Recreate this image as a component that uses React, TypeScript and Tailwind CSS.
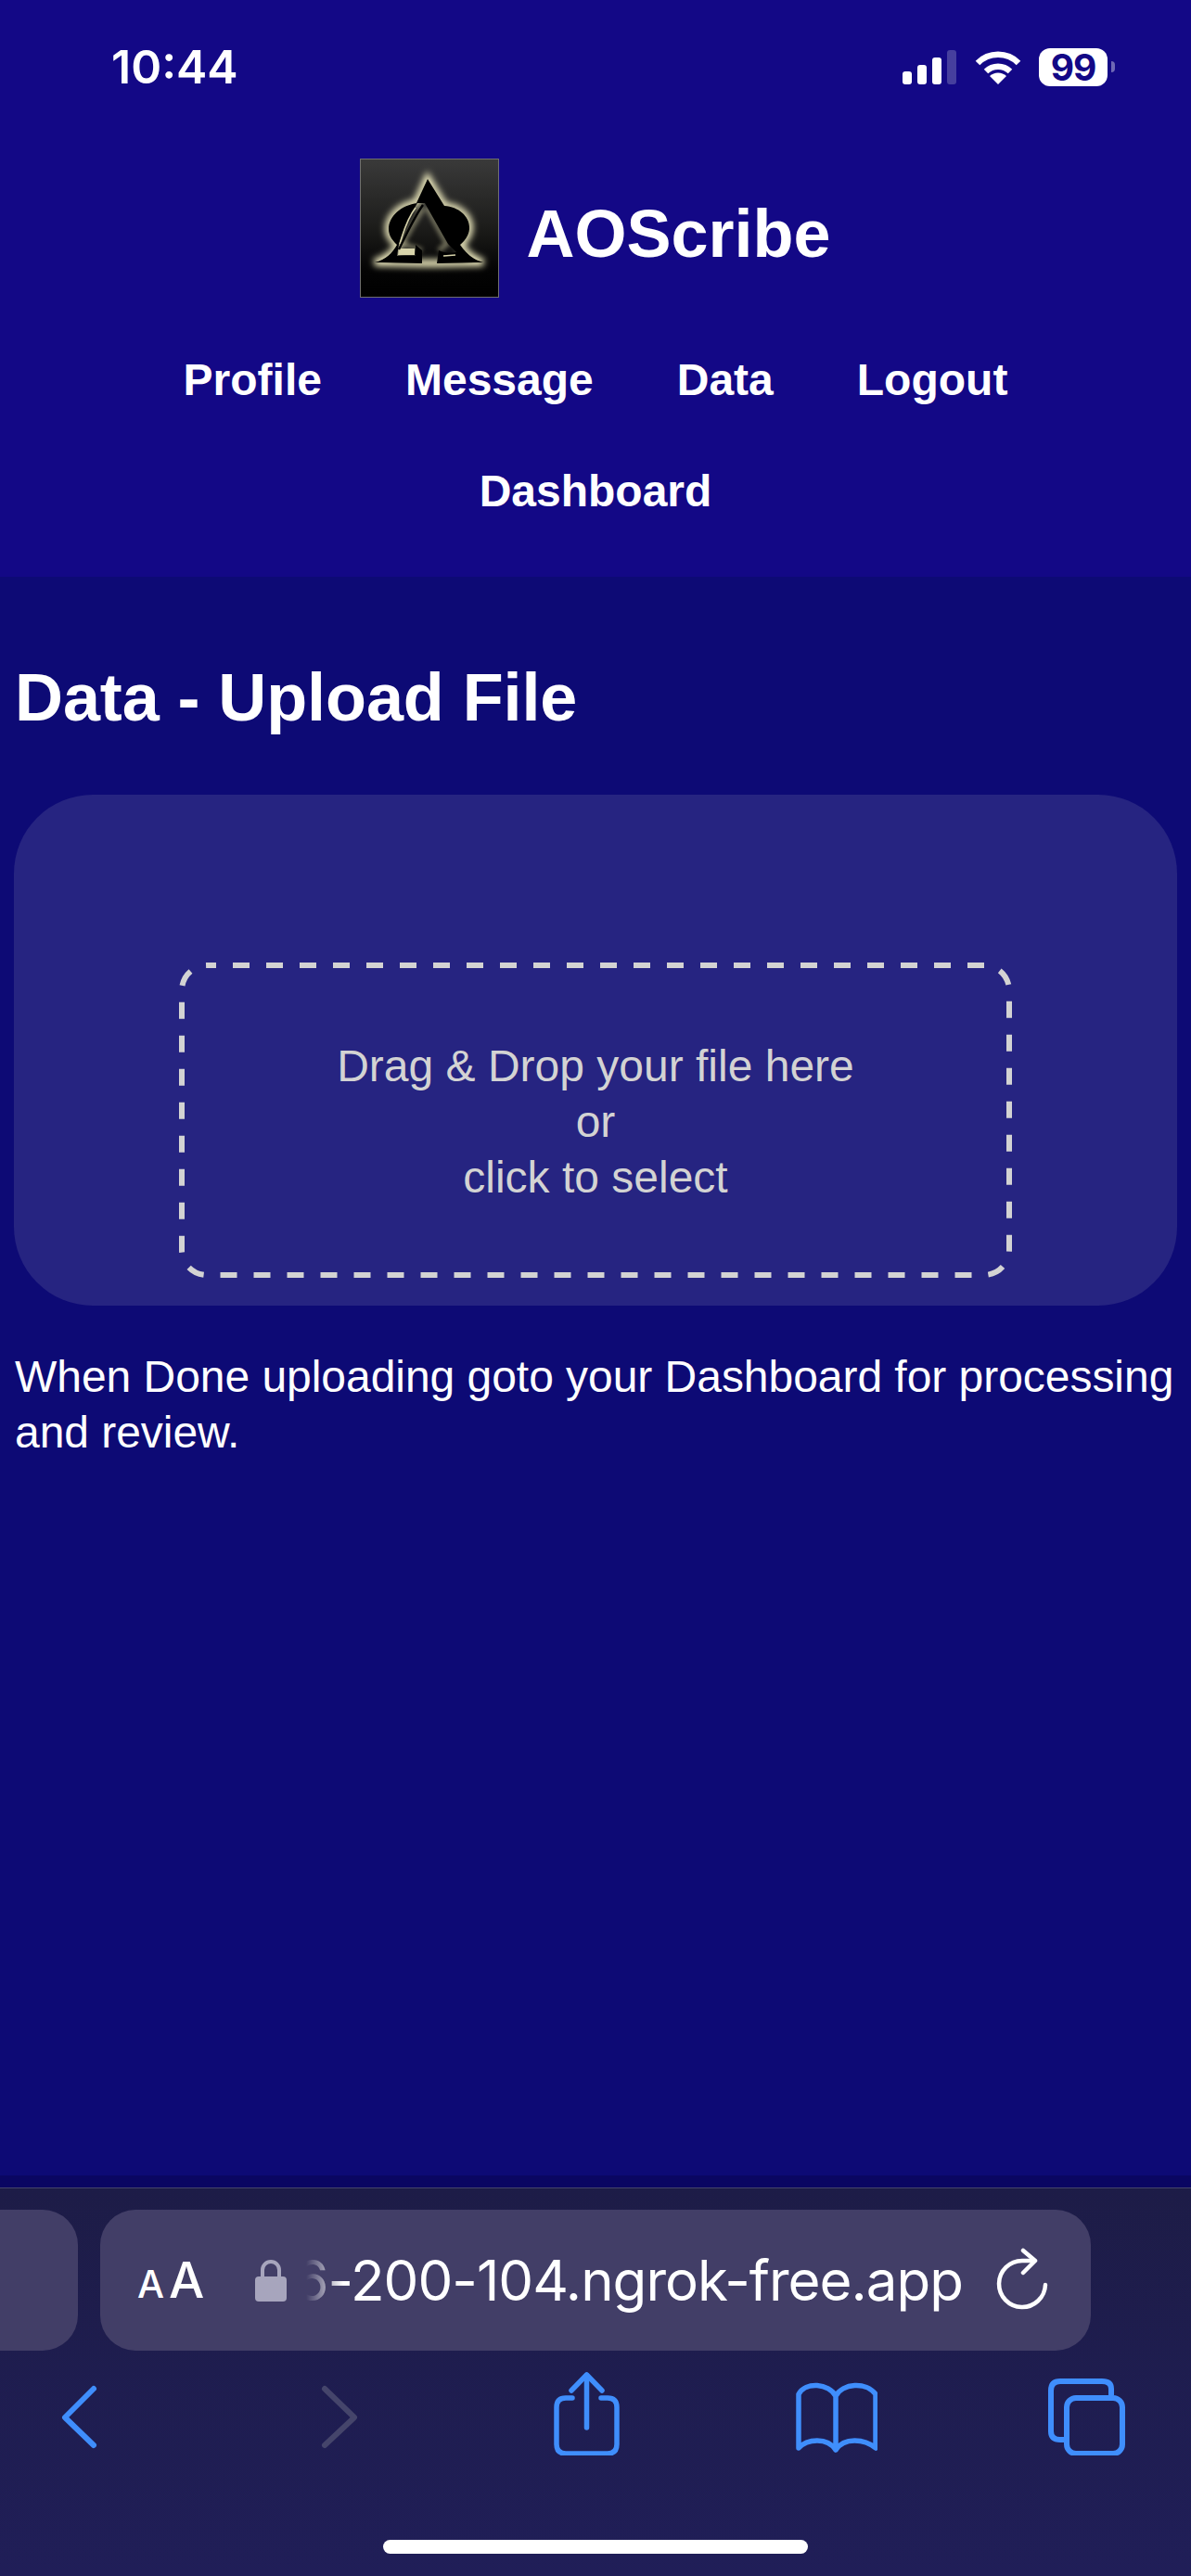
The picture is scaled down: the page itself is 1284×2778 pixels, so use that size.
function Logo() {
  return (
    <svg width="150" height="150" viewBox="0 0 150 150" className="shrink-0">
      <defs>
        <linearGradient id="logoBg" x1="0" y1="0" x2="0" y2="1">
          <stop offset="0" stopColor="#3a3a3a" />
          <stop offset="0.5" stopColor="#1c1c1a" />
          <stop offset="0.8" stopColor="#040404" />
          <stop offset="1" stopColor="#000000" />
        </linearGradient>
        <filter id="logoGlow" x="-30%" y="-30%" width="160%" height="160%">
          <feGaussianBlur stdDeviation="3.5" />
        </filter>
        <filter id="logoInner" x="-30%" y="-30%" width="160%" height="160%">
          <feGaussianBlur stdDeviation="2.5" />
        </filter>
      </defs>
      <rect x="0.5" y="0.5" width="149" height="149" fill="url(#logoBg)" stroke="#6f6f6f" />
      <path
        d="M73 22 L91 51 C107 52 119 63 118 76 C117 85 112 89 108 93 C114 102 122 109 133 112 L83 113 L67 113 L16 112 C28 109 36 102 42 93 C36 89 31 84 31 76 C31 62 45 50 61 48 Z"
        fill="none"
        stroke="#f0ecc0"
        strokeWidth="8"
        filter="url(#logoGlow)"
      />
      {/* dim glow along the inside of the centre gap */}
      <path
        d="M68 54 C60 66 52 80 46 92 L67 99 M72 52 L94 92 L85 99"
        fill="none"
        stroke="#cfcba2"
        strokeWidth="5"
        opacity="0.55"
        filter="url(#logoInner)"
      />
      {/* alpha + right half of the omega */}
      <path
        d="M73 22 L91 51 C107 52 119 63 118 76 C117 85 112 89 108 93 C114 102 122 109 133 112 L83 113 L85 99 C91 102 98 102 104 101 L95 92 L70 48 L61 48 Z"
        fill="#000"
      />
      {/* left half of the omega */}
      <path
        d="M62 48 C45 50 31 62 31 76 C31 84 36 89 40 93 C35 102 28 109 16 112 L67 113 L67 99 L60 93 L60 105 L40 105 L42 93 C47 78 53 62 62 48 Z"
        fill="#000"
      />
      <path d="M42 97 L59 97 L59 104 L41 104 Z" fill="#d8d4ab" />
      <path d="M60 53 C53 62 47 78 43 92" fill="none" stroke="#d8d4ab" strokeWidth="1.6" />
      <path d="M68 50 C58 64 50 82 42 98" fill="none" stroke="#000" strokeWidth="2.4" />
      <path d="M90 105 L103 104" fill="none" stroke="#d8d4ab" strokeWidth="1.4" />
    </svg>
  )
}

function StatusBar() {
  return (
    <div className="flex items-center justify-between h-[56px] pl-[120px] pr-[82px] mt-[44px]">
      <span className="text-[50px] font-semibold leading-none text-white font-['Inter',sans-serif]">10:44</span>
      <div className="flex items-center">
        <div className="flex items-end gap-[6px] h-[37px] mt-[1px]">
          <div className="w-[10px] h-[14px] rounded-[3px] bg-white" />
          <div className="w-[10px] h-[21px] rounded-[3px] bg-white" />
          <div className="w-[10px] h-[29px] rounded-[3px] bg-white" />
          <div className="w-[10px] h-[37px] rounded-[3px] bg-[#463f9e]" />
        </div>
        <svg width="50" height="37" viewBox="0 0 50 37" className="ml-[20px]">
          <path d="M3 14 A31 31 0 0 1 47 14" fill="none" stroke="#fff" strokeWidth="6.5" />
          <path d="M12 23 A19 19 0 0 1 38 23" fill="none" stroke="#fff" strokeWidth="6.5" />
          <path d="M25 37 L16 28 A13 13 0 0 1 34 28 Z" fill="#fff" />
        </svg>
        <div className="ml-[19px] w-[74px] h-[41px] rounded-[12px] bg-white flex items-center justify-center text-[39px] tracking-[-1px] font-bold leading-none text-[#130886] font-['Inter',sans-serif]">
          99
        </div>
        <div className="ml-[4px] w-[4px] h-[12px] rounded-r-full bg-[#6f68b5]" />
      </div>
    </div>
  )
}

function Header() {
  const links = ["Profile", "Message", "Data", "Logout", "Dashboard"]
  return (
    <header className="bg-[#130886] h-[622px] shrink-0">
      <StatusBar />
      <div className="flex items-center justify-center gap-[29px] mt-[71px]">
        <Logo />
        <h1 className="pt-[12px] text-[72px] font-bold leading-none text-white">AOScribe</h1>
      </div>
      <nav className="flex flex-wrap justify-center mt-[29px] px-[130px]">
        {links.map((link) => (
          <a key={link} className="px-[45px] py-[30px] text-[48px] font-bold leading-[60px] text-white">
            {link}
          </a>
        ))}
      </nav>
    </header>
  )
}

function UploadPanel() {
  return (
    <div className="mx-[15px] pt-[181px] pb-[30px] px-[178px] rounded-[85px] bg-[#262481]">
      <div className="relative h-[340px] pt-[4px] flex flex-col items-center justify-center text-center text-[48px] leading-[60px] text-[#d3d3d3]">
        <span>Drag &amp; Drop your file here</span>
        <span>or</span>
        <span>click to select</span>
        {/* dashed outline */}
        <svg className="absolute inset-0" width="898" height="340" viewBox="0 0 898 340" fill="none">
          <rect x="3" y="3" width="892" height="334" rx="27" stroke="#d3d3d3" strokeWidth="6" strokeDasharray="18 18" strokeDashoffset="8" />
        </svg>
      </div>
    </div>
  )
}

function ToolbarIcons() {
  return (
    <div className="flex gap-[182px] pl-[40px] mt-[23px]">
      {/* back */}
      <svg width="90" height="90" viewBox="0 0 90 90" fill="none" stroke="#3f8efc" strokeWidth="6" strokeLinecap="round" strokeLinejoin="round">
        <path d="M61 18 L30 49 L61 79" />
      </svg>
      {/* forward */}
      <svg width="90" height="90" viewBox="0 0 90 90" fill="none" stroke="#45456b" strokeWidth="6" strokeLinecap="round" strokeLinejoin="round">
        <path d="M38 18 L70 49 L38 79" />
      </svg>
      {/* share */}
      <svg width="90" height="90" viewBox="0 0 90 90" fill="none" stroke="#3f8efc" strokeWidth="5.5" strokeLinecap="round" strokeLinejoin="round">
        <path d="M33 28 H26 Q16 28 16 38 V78 Q16 88 26 88 H71 Q81 88 81 78 V38 Q81 28 71 28 H64" />
        <path d="M48.5 4 V60" />
        <path d="M32 20 L48.5 3 L65 20" />
      </svg>
      {/* bookmarks */}
      <svg width="90" height="90" viewBox="0 0 90 90" fill="none" stroke="#3f8efc" strokeWidth="5.5" strokeLinecap="round" strokeLinejoin="round">
        <path d="M45 26 C38 12 12 10 5 24 V82 C14 72 36 70 45 84 C54 70 76 72 88 82 V24 C78 10 52 12 45 26 V84" />
      </svg>
      {/* tabs */}
      <svg width="90" height="90" viewBox="0 0 90 90" fill="none" stroke="#3f8efc" strokeWidth="6" strokeLinejoin="round">
        <path d="M70 25 V18 Q70 10 60 10 H15 Q5 10 5 20 V64 Q5 73 15 73 H22" />
        <rect x="22" y="28" width="60" height="60" rx="10" />
      </svg>
    </div>
  )
}

function BrowserBar() {
  return (
    <div className="shrink-0 h-[419px] border-t border-[#45456b] bg-gradient-to-b from-[#1d1c47] to-[#201e58]">
      <div className="flex gap-[24px] pt-[23px]">
        <div className="w-[84px] h-[152px] rounded-r-[38px] bg-[#423e67]" />
        <div className="w-[1068px] h-[152px] rounded-[38px] bg-[#423e67] pl-[40px] flex items-center text-white font-['Inter',sans-serif]">
          <div className="w-[127px] flex items-baseline font-medium leading-none">
            <span className="text-[41px]">A</span>
            <span className="ml-[5px] text-[54px]">A</span>
          </div>
          <svg width="34" height="48" viewBox="0 0 34 48">
            <path d="M8 20 V13 A9 9 0 0 1 26 13 V20" fill="none" stroke="#a7a5bd" strokeWidth="4" />
            <rect x="0" y="20" width="34" height="27" rx="4" fill="#a7a5bd" />
          </svg>
          <div className="ml-[21px] flex-1 flex justify-end overflow-hidden whitespace-nowrap text-[60px] leading-[80px] tracking-[-1px] [mask-image:linear-gradient(to_right,transparent,black_40px)]">
            <span>6-200-104.ngrok-free.app</span>
          </div>
          <svg width="60" height="70" viewBox="0 0 60 70" fill="none" stroke="#fff" strokeWidth="4.5" strokeLinecap="round" strokeLinejoin="round" className="ml-[34px] mr-[44px]">
            <path d="M31 3 L44 14 L31 27" />
            <path d="M43 14 H30 A25 25 0 1 0 55 40" />
          </svg>
        </div>
      </div>
      <ToolbarIcons />
      <div className="w-[458px] h-[15px] mx-auto mt-[91px] rounded-full bg-white" />
    </div>
  )
}

export default function App() {
  return (
    <div className="flex flex-col h-[2778px] bg-[#0d0a75] font-['Liberation_Sans',Arial,sans-serif]">
      <Header />
      <main className="flex-1">
        <h2 className="pt-[90px] pb-[65px] pl-[16px] text-[72px] font-bold leading-[80px] tracking-[-0.1px] text-white">Data - Upload File</h2>
        <UploadPanel />
        <p className="mt-[47px] px-[16px] text-[48px] leading-[60px] tracking-[-0.04px] text-white">
          When Done uploading goto your Dashboard for processing and review.
        </p>
      </main>
      <div className="shrink-0 h-[13px] bg-[#0a0662]" />
      <BrowserBar />
    </div>
  )
}
